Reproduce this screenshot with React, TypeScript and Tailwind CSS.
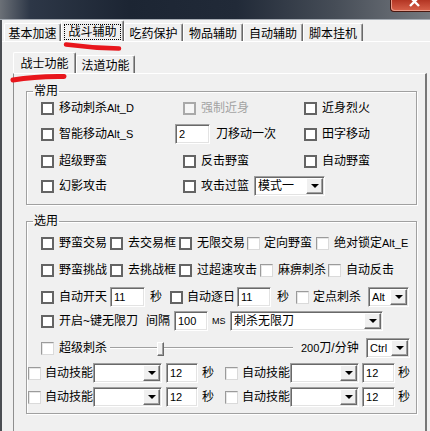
import React from "react";

const sunken =
  "bg-white border border-t-[#a0a0a0] border-l-[#a0a0a0] border-b-white border-r-white shadow-[inset_1px_1px_0_#696969,inset_-1px_-1px_0_#e3e3e3]";

function Cb({ kind = "3d" }: { kind?: "3d" | "flat" | "dis" }) {
  if (kind === "flat")
    return (
      <span className="w-[13px] h-[13px] shrink-0 bg-white border border-t-[#9b9b9b] border-l-[#9b9b9b] border-b-[#dadada] border-r-[#dadada] shadow-[inset_1px_1px_0_#e6e6e6]" />
    );
  if (kind === "dis")
    return <span className="w-[13px] h-[13px] shrink-0 bg-[#f6f6f6] border-2 border-[#a9a9a9]" />;
  return <span className="w-[13px] h-[13px] shrink-0 bg-white border-2 border-[#646464]" />;
}

function Item({
  w = "",
  kind = "3d",
  gap = "ml-[5px]",
  cls = "",
  dim = false,
  children,
}: {
  w?: string;
  kind?: "3d" | "flat" | "dis";
  gap?: string;
  cls?: string;
  dim?: boolean;
  children: React.ReactNode;
}) {
  return (
    <div className={`flex items-center shrink-0 ${w} ${cls}`}>
      <Cb kind={kind} />
      <span className={`${gap} whitespace-nowrap ${dim ? "text-[#a3a3a3]" : ""}`}>{children}</span>
    </div>
  );
}

function L({ children }: { children: React.ReactNode }) {
  return <span className="text-[11px]">{children}</span>;
}

function Edit({ w, v, cls = "" }: { w: string; v: string; cls?: string }) {
  return (
    <div className={`${sunken} ${w} ${cls} h-[20px] shrink-0 flex items-center pl-[3px] text-[11px]`}>{v}</div>
  );
}

function Combo({ w, v, cls = "", small = false }: { w: string; v: string; cls?: string; small?: boolean }) {
  return (
    <div className={`${sunken} ${w} ${cls} h-[20px] shrink-0 flex items-stretch p-[1px]`}>
      <span
        className={`flex-1 flex items-center pl-[2px] whitespace-nowrap overflow-hidden ${small ? "text-[11px]" : ""}`}
      >
        {v}
      </span>
      <span className="w-[17px] shrink-0 flex items-center justify-center bg-[#f0f0f0] border border-t-white border-l-white border-b-[#696969] border-r-[#696969] shadow-[inset_-1px_-1px_0_#a0a0a0]">
        <span className="w-0 h-0 border-x-[4px] border-x-transparent border-t-[4px] border-t-black" />
      </span>
    </div>
  );
}

function Tab({
  w,
  sel = false,
  focus = false,
  children,
}: {
  w: string;
  sel?: boolean;
  focus?: boolean;
  children: React.ReactNode;
}) {
  return (
    <div
      className={`${w} ${
        sel ? "h-[21px] z-10 pt-[1px]" : "h-[18px] pt-[3px]"
      } shrink-0 flex items-center justify-center border-l border-t border-r border-l-white border-t-white border-r-[#696969] rounded-t-[2px] shadow-[inset_-1px_0_0_#a0a0a0] bg-[#f0f0f0]`}
    >
      {focus ? (
        <span className="outline-1 outline-dotted outline-black px-[3px] leading-[14px]">{children}</span>
      ) : (
        <span className="leading-[14px]">{children}</span>
      )}
    </div>
  );
}

function Group({ title, cls = "", children }: { title: string; cls?: string; children: React.ReactNode }) {
  return (
    <fieldset
      className={`w-[391px] border border-[#a0a0a0] shadow-[1px_1px_0_#ffffff,inset_1px_1px_0_#ffffff] p-0 m-0 ${cls}`}
    >
      <legend className="ml-[6px] px-[1px] leading-[14px] text-[12px]">{title}</legend>
      {children}
    </fieldset>
  );
}

export default function App() {
  return (
    <div className="relative w-[430px] h-[431px] overflow-hidden bg-[#f0f0f0] text-black text-[12px] leading-[14px] font-['Liberation_Sans','Noto_Sans_CJK_SC',sans-serif] select-none">
      {/* title bar */}
      <div className="h-[20px] flex justify-end border-b border-b-[#a7adb5] bg-[linear-gradient(90deg,#6b7077_0%,#2d3747_7%,#1c2533_30%,#212a38_55%,#464d57_78%,#75797f_100%)]">
        <div className="w-[40px] h-[12px] rounded-bl-[4px] border-l border-b border-[#4a1810] bg-[linear-gradient(180deg,#b33523,#d8624b)] shadow-[inset_1px_-1px_0_#e89a88]">
          <svg width="40" height="12" viewBox="0 0 40 12">
            <path d="M19 -3 L28 6 M28 -3 L19 6" stroke="#ffffff" strokeWidth="2.4" fill="none" />
          </svg>
        </div>
      </div>

      <div className="flex h-[411px]">
        <div className="w-[2px] shrink-0 bg-[#4a4d52]" />
        <div className="flex-1 flex flex-col">
          {/* outer tabs */}
          <div className="h-[21px] flex items-end pl-[2px]">
            <Tab w="w-[57px]">基本加速</Tab>
            <Tab w="w-[63px]" sel focus>
              战斗辅助
            </Tab>
            <Tab w="w-[59px]">吃药保护</Tab>
            <Tab w="w-[60px]">物品辅助</Tab>
            <Tab w="w-[60px]">自动辅助</Tab>
            <Tab w="w-[60px]">脚本挂机</Tab>
          </div>
          <div className="flex-1 border-t border-t-white pt-[11px] pl-[11px] flex flex-col">
            {/* sub tabs */}
            <div className="h-[20px] flex items-end">
              <Tab w="w-[63px]" sel>
                战士功能
              </Tab>
              <Tab w="w-[59px]">法道功能</Tab>
            </div>
            {/* inner pane */}
            <div className="flex-1 w-[414px] border-l border-l-[#8e8e8e] border-t border-t-white border-r-2 border-r-[#777777] pl-[12px] pt-[10px]">
              <Group title="常用">
                <div className="flex items-center h-[20px] ml-[14px]">
                  <Item w="w-[142px]">
                    移动刺杀<L>Alt_D</L>
                  </Item>
                  <Item w="w-[121px]" kind="dis" dim>
                    强制近身
                  </Item>
                  <Item>近身烈火</Item>
                </div>
                <div className="flex items-center h-[20px] ml-[14px] mt-[6px]">
                  <Item w="w-[134px]">
                    智能移动<L>Alt_S</L>
                  </Item>
                  <div className="flex items-center w-[129px] shrink-0">
                    <Edit w="w-[35px]" v="2" />
                    <span className="ml-[6px] whitespace-nowrap">刀移动一次</span>
                  </div>
                  <Item>田字移动</Item>
                </div>
                <div className="flex items-center h-[20px] ml-[14px] mt-[7px]">
                  <Item w="w-[142px]">超级野蛮</Item>
                  <Item w="w-[121px]">反击野蛮</Item>
                  <Item>自动野蛮</Item>
                </div>
                <div className="flex items-center h-[20px] ml-[14px] mt-[5px] mb-[8px]">
                  <Item w="w-[142px]">幻影攻击</Item>
                  <Item>攻击过篮</Item>
                  <Combo w="w-[71px]" v="模式一" cls="ml-[5px]" />
                </div>
              </Group>

              <Group title="选用" cls="mt-[9px]">
                <div className="flex items-center h-[20px] ml-[14px] mt-[5px]">
                  <Item w="w-[69px]">野蛮交易</Item>
                  <Item w="w-[69px]">去交易框</Item>
                  <Item w="w-[68px]">无限交易</Item>
                  <Item w="w-[69px]" kind="flat" gap="ml-[4px]">
                    定向野蛮
                  </Item>
                  <Item kind="flat">
                    绝对锁定<L>Alt_E</L>
                  </Item>
                </div>
                <div className="flex items-center h-[20px] ml-[14px] mt-[7px]">
                  <Item w="w-[69px]">野蛮挑战</Item>
                  <Item w="w-[69px]">去挑战框</Item>
                  <Item w="w-[81px]">过超速攻击</Item>
                  <Item w="w-[68px]" kind="flat">
                    麻痹刺杀
                  </Item>
                  <Item kind="flat">自动反击</Item>
                </div>
                <div className="flex items-center h-[20px] ml-[14px] mt-[7px]">
                  <Item w="w-[69px]">自动开天</Item>
                  <Edit w="w-[35px]" v="11" />
                  <span className="ml-[5px]">秒</span>
                  <Item cls="ml-[8px]" gap="ml-[4px]">
                    自动逐日
                  </Item>
                  <Edit w="w-[34px]" v="11" cls="ml-[2px]" />
                  <span className="ml-[6px]">秒</span>
                  <Item kind="flat" cls="ml-[7px]" gap="ml-[4px]">
                    定点刺杀
                  </Item>
                  <Combo w="w-[41px]" v="Alt" cls="ml-[7px]" small />
                </div>
                <div className="flex items-center h-[20px] ml-[14px] mt-[4px]">
                  <Item w="w-[105px]">开启~键无限刀</Item>
                  <span className="w-[24px] shrink-0 whitespace-nowrap">间隔</span>
                  <Edit w="w-[34px]" v="100" cls="ml-[4px]" />
                  <span className="ml-[4px] w-[18px] shrink-0 text-[9px]">MS</span>
                  <Combo w="w-[153px]" v="刺杀无限刀" />
                </div>
                <div className="flex items-center h-[20px] ml-[14px] mt-[7px]">
                  <Item w="w-[69px]" kind="flat">
                    超级刺杀
                  </Item>
                  <div className="relative w-[183px] h-[20px] shrink-0 flex items-center">
                    <div className="w-full h-[2px] border-t border-t-[#a0a0a0] border-b border-b-white" />
                    <div className="absolute left-[47px] top-[4px] w-[7px] h-[14px] bg-[#f0f0f0] border border-t-white border-l-white border-b-[#696969] border-r-[#696969] shadow-[inset_-1px_-1px_0_#a0a0a0]" />
                  </div>
                  <span className="ml-[8px] w-[65px] shrink-0 whitespace-nowrap">
                    <L>200</L>刀/分钟
                  </span>
                  <Combo w="w-[44px]" v="Ctrl" small />
                </div>
                {[0, 1].map((i) => (
                  <div
                    key={i}
                    className={`flex items-center h-[20px] ml-[1px] ${i === 0 ? "mt-[5px]" : "mt-[4px] mb-[6px]"}`}
                  >
                    <Item w="w-[65px]" kind="flat" gap="ml-[4px]">
                      自动技能
                    </Item>
                    <Combo w="w-[69px]" v="" />
                    <Edit w="w-[32px]" v="12" cls="ml-[4px]" />
                    <span className="ml-[4px]">秒</span>
                    <Item w="w-[65px]" kind="flat" gap="ml-[4px]" cls="ml-[11px]">
                      自动技能
                    </Item>
                    <Combo w="w-[69px]" v="" />
                    <Edit w="w-[33px]" v="12" cls="ml-[3px]" />
                    <span className="ml-[3px]">秒</span>
                  </div>
                ))}
              </Group>
            </div>
          </div>
        </div>
      </div>

      {/* red annotation strokes */}
      <svg className="absolute left-0 top-0 pointer-events-none" width="430" height="431" viewBox="0 0 430 431">
        <path d="M66 44.5 Q 92 48 119 48.5" stroke="#e8161c" strokeWidth="4.5" strokeLinecap="round" fill="none" />
        <path d="M13 80 Q 36 76 64 76.5" stroke="#e8161c" strokeWidth="5" strokeLinecap="round" fill="none" />
      </svg>
    </div>
  );
}
